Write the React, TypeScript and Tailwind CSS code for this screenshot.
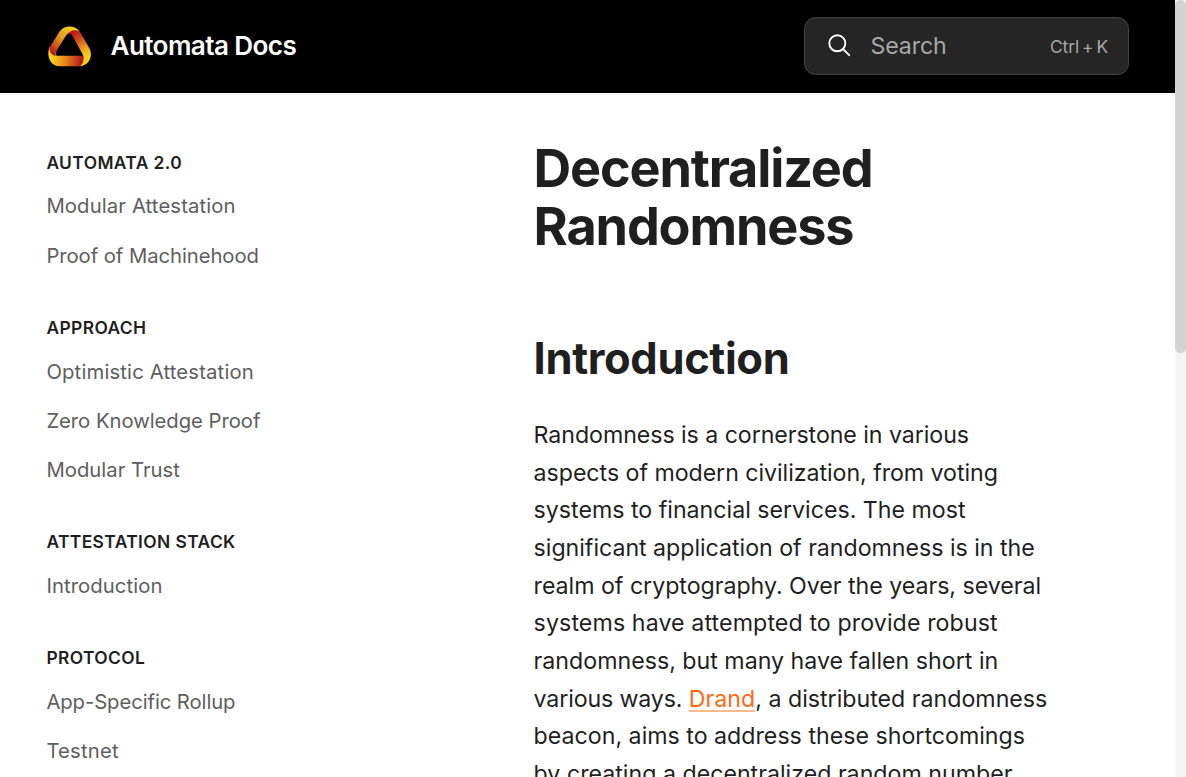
const sections = [
  {
    title: "Automata 2.0",
    items: [
      { label: "Modular Attestation", tracking: "-mt-[0.6px] mb-[0.6px] tracking-[0.12px]" },
      { label: "Proof of Machinehood", tracking: "tracking-[-0.07px]" },
    ],
  },
  {
    title: "Approach",
    items: [
      { label: "Optimistic Attestation", tracking: "tracking-[0.15px]" },
      { label: "Zero Knowledge Proof", tracking: "tracking-[-0.05px]" },
      { label: "Modular Trust", tracking: "tracking-[0.01px]" },
    ],
  },
  { title: "Attestation Stack", items: [{ label: "Introduction", tracking: "tracking-[0.07px]" }] },
  {
    title: "Protocol",
    items: [
      { label: "App-Specific Rollup", tracking: "tracking-[-0.09px]" },
      { label: "Testnet", tracking: "tracking-[0.2px]" },
    ],
  },
];

function Logo() {
  return (
    <svg viewBox="0 0 46 44" className="mb-px h-[44px] w-[46px] shrink-0">
      <defs>
        <linearGradient id="left" gradientUnits="userSpaceOnUse" x1="27" y1="4" x2="7" y2="30">
          <stop offset="0" stopColor="#f9cf1c" />
          <stop offset="0.45" stopColor="#e59a24" />
          <stop offset="1" stopColor="#b5161c" />
        </linearGradient>
        <linearGradient id="right" gradientUnits="userSpaceOnUse" x1="26" y1="8" x2="41" y2="33">
          <stop offset="0" stopColor="#b5161c" />
          <stop offset="0.3" stopColor="#cc431f" />
          <stop offset="0.75" stopColor="#f0ae1c" />
          <stop offset="1" stopColor="#f9cf1c" />
        </linearGradient>
        <linearGradient id="base" gradientUnits="userSpaceOnUse" x1="6" y1="34" x2="36" y2="37">
          <stop offset="0" stopColor="#f9cf1c" />
          <stop offset="0.45" stopColor="#e8841f" />
          <stop offset="1" stopColor="#b5161c" />
        </linearGradient>
      </defs>
      <path d="M3.600 23 C0.500 30 3 42.200 14 42.200 H34 C38 42 38.500 35 36.500 31.800 H12 C9.500 31.800 9 29.500 10.500 27 Z" fill="url(#base)" />
      <path d="M24 3 C28.500 2.500 31.500 4 34 8 L43.500 24.500 C47 31 44 41.500 34 42.200 C37.500 40 38.500 34 36.500 30 L26.500 12 C25.500 9.500 22.500 9 20.500 11 Z" fill="url(#right)" />
      <path d="M33 7 C29 1.200 18.500 0.800 14 7 L3.600 23.500 C3 27 5 31 9.700 32 C9.200 30 9.600 28.500 10.500 27 L20 11.500 C23 7 28 5 33 7 Z" fill="url(#left)" />
    </svg>
  );
}

function Header() {
  return (
    <header className="flex h-[93px] shrink-0 items-center justify-between bg-black pr-[46px] pl-[46px]">
      <a className="flex items-center">
        <Logo />
        <span className="ml-[18.500px] pb-[2px] text-[26.1px] font-semibold tracking-[-0.6px] text-white">Automata Docs</span>
      </a>
      <button className="mb-px flex h-[58px] w-[325px] items-center rounded-[11.6px] border-[1.45px] border-[#444444] bg-[#252525] pr-[20px] pl-[23px] text-[#a8a8a8]">
        <svg viewBox="0 0 24 24" className="size-[24px] text-white" fill="none" stroke="currentColor" strokeWidth="1.9" strokeLinecap="round">
          <circle cx="9.3" cy="9.3" r="8" />
          <path d="M15.1 15.1 L21.2 21.2" />
        </svg>
        <span className="ml-[18.500px] text-[23.2px] tracking-[-0.15px]">Search</span>
        <span className="ml-auto pt-[2px] text-[17.4px] tracking-[-0.1px] [word-spacing:-1.8px]">Ctrl + K</span>
      </button>
    </header>
  );
}

export default function App() {
  return (
    <div className="flex h-[777px] w-[1186px] overflow-hidden bg-white font-[Inter,sans-serif] text-[#1f1f1f]">
      <div className="flex w-[1175px] flex-col">
        <Header />
        <div className="flex min-h-0 flex-1">
          <nav className="flex w-[533.6px] shrink-0 flex-col gap-[27px] overflow-hidden pt-[50px] pl-[46.4px]">
            {sections.map((s) => (
              <section key={s.title}>
                <h3 className="flex h-[39.4px] items-center text-[17.4px] font-semibold tracking-[0.4px] uppercase">{s.title}</h3>
                {s.items.map((item) => (
                  <a key={item.label} className={`flex h-[49.3px] items-center text-[20.3px] text-[#5e5e5e] ${item.tracking}`}>
                    {item.label}
                  </a>
                ))}
              </section>
            ))}
          </nav>
          <main className="w-[540px] shrink-0 overflow-hidden pt-[46.4px]">
            <h1 className="w-[400px] text-[52.2px] leading-[58px] font-bold tracking-[-1.17px]">Decentralized Randomness</h1>
            <h2 className="mt-[76.900px] text-[43.5px] leading-[52.2px] font-bold tracking-[-0.36px]">Introduction</h2>
            <p className="mt-[32.600px] text-[23.2px] leading-[37.64px] whitespace-nowrap">
              <span className="block tracking-[-0.065px]">Randomness is a cornerstone in various </span>
              <span className="block tracking-[-0.05px]">aspects of modern civilization, from voting </span>
              <span className="block tracking-[-0.01px]">systems to financial services. The most </span>
              <span className="block tracking-[-0.03px]">significant application of randomness is in the </span>
              <span className="block tracking-[-0.03px]">realm of cryptography. Over the years, several </span>
              <span className="block tracking-[0.1px]">systems have attempted to provide robust </span>
              <span className="block">randomness, but many have fallen short in </span>
              <span className="block">
                <span className="tracking-[-0.14px]">various ways. </span>
                <a className="text-[#ff6a13] underline decoration-[#ffbb8a] decoration-2 underline-offset-[3px]">Drand</a>, a
                distributed randomness{" "}
              </span>
              <span className="block">beacon, aims to address these shortcomings </span>
              <span className="block">by creating a decentralized random number</span>
            </p>
          </main>
        </div>
      </div>
      <div className="w-[11px] bg-[#f5f5f5]">
        <div className="h-[353px] rounded-full bg-[#d3d3d3]" />
      </div>
    </div>
  );
}
